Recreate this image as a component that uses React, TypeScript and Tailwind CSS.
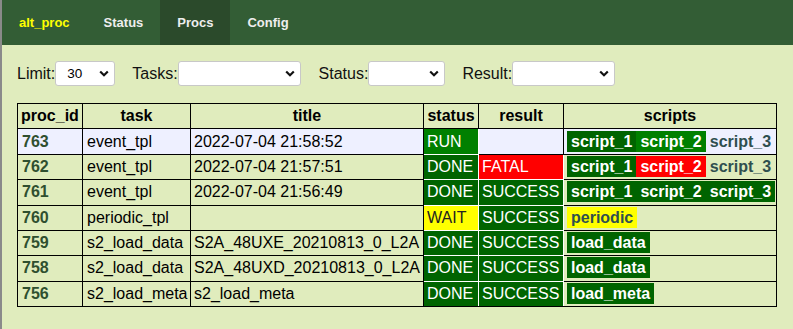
import React from 'react';

type Script = { name: string; state?: 'done' | 'run' | 'fail' | 'wait' };

interface Proc {
  id: number;
  task: string;
  title: string;
  status: 'RUN' | 'DONE' | 'WAIT';
  result: '' | 'FATAL' | 'SUCCESS';
  scripts: Script[];
  current?: boolean;
}

const procs: Proc[] = [
  {
    id: 763, task: 'event_tpl', title: '2022-07-04 21:58:52', status: 'RUN', result: '', current: true,
    scripts: [{ name: 'script_1', state: 'done' }, { name: 'script_2', state: 'run' }, { name: 'script_3' }],
  },
  {
    id: 762, task: 'event_tpl', title: '2022-07-04 21:57:51', status: 'DONE', result: 'FATAL',
    scripts: [{ name: 'script_1', state: 'done' }, { name: 'script_2', state: 'fail' }, { name: 'script_3' }],
  },
  {
    id: 761, task: 'event_tpl', title: '2022-07-04 21:56:49', status: 'DONE', result: 'SUCCESS',
    scripts: [{ name: 'script_1', state: 'done' }, { name: 'script_2', state: 'done' }, { name: 'script_3', state: 'done' }],
  },
  { id: 760, task: 'periodic_tpl', title: '', status: 'WAIT', result: 'SUCCESS', scripts: [{ name: 'periodic', state: 'wait' }] },
  { id: 759, task: 's2_load_data', title: 'S2A_48UXE_20210813_0_L2A', status: 'DONE', result: 'SUCCESS', scripts: [{ name: 'load_data', state: 'done' }] },
  { id: 758, task: 's2_load_data', title: 'S2A_48UXD_20210813_0_L2A', status: 'DONE', result: 'SUCCESS', scripts: [{ name: 'load_data', state: 'done' }] },
  { id: 756, task: 's2_load_meta', title: 's2_load_meta', status: 'DONE', result: 'SUCCESS', scripts: [{ name: 'load_meta', state: 'done' }] },
];

const statusCls: Record<string, string> = {
  RUN: 'bg-[#008000] text-white',
  DONE: 'bg-[#006400] text-white',
  WAIT: 'bg-[#ffff00] text-[#222]',
};

const resultCls: Record<string, string> = {
  FATAL: 'bg-[#ff0000] text-white',
  SUCCESS: 'bg-[#006400] text-white',
};

const scriptCls: Record<string, string> = {
  done: 'bg-[#006400] text-white',
  run: 'bg-[#008000] text-white',
  fail: 'bg-[#ff0000] text-white',
  wait: 'bg-[#ffff00] text-[#2f4f4f]',
};

const Chevron = () => (
  <svg width="10" height="7" viewBox="0 0 10 7" className="shrink-0">
    <path d="M1.2 1.5 L5 5.2 L8.8 1.5" fill="none" stroke="#111" strokeWidth="2.2" />
  </svg>
);

const FakeSelect = ({ width, value = '' }: { width: string; value?: string }) => (
  <div
    className={`${width} h-[25px] flex items-center justify-between bg-white border border-[#c8c8c8] rounded-[3px] pl-[11px] pr-[5px] text-[13.5px] text-black`}
  >
    <span>{value}</span>
    <Chevron />
  </div>
);

const App: React.FC = () => {
  const last = procs.length - 1;
  return (
    <div className="w-[793px] h-[329px] bg-[#e0ecbd] border-l-2 border-[#8a8a8a] overflow-hidden font-['Liberation_Sans',Arial,sans-serif] leading-[normal]">
      <nav className="h-[45px] bg-[#335d35] flex text-[13px] font-bold leading-[45px] text-[#eeeeee]">
        <span className="px-[17px] text-[#ffff00]">alt_proc</span>
        <span className="px-[17px]">Status</span>
        <span className="px-[17px] bg-[#2b4a2b]">Procs</span>
        <span className="px-[17px]">Config</span>
      </nav>

      <div className="flex items-center pl-[15px] mt-[16px] text-[16px] text-[#111]">
        <span>Limit:</span>
        <FakeSelect width="w-[60px]" value="30" />
        <span className="ml-[17px]">Tasks:</span>
        <FakeSelect width="w-[123px]" />
        <span className="ml-[18px]">Status:</span>
        <FakeSelect width="w-[77px]" />
        <span className="ml-[17px]">Result:</span>
        <FakeSelect width="w-[103px]" />
      </div>

      <table className="ml-[15px] mt-[17px] w-[759px] table-fixed border-collapse text-[16px] leading-[normal] text-black">
        <colgroup>
          <col className="w-[65px]" />
          <col className="w-[108px]" />
          <col className="w-[233px]" />
          <col className="w-[55px]" />
          <col className="w-[85px]" />
          <col className="w-[213px]" />
        </colgroup>
        <thead>
          <tr>
            {['proc_id', 'task', 'title', 'status', 'result', 'scripts'].map((h) => (
              <th key={h} className="border border-black px-[3px] py-[3.2px] font-bold text-center whitespace-nowrap">
                {h}
              </th>
            ))}
          </tr>
        </thead>
        <tbody>
          {procs.map((p, i) => {
            const edge = i === last ? 'border-r-white' : 'border-r-white border-b-white';
            return (
              <tr key={p.id} className={p.current ? 'bg-[#eef0ff]' : ''}>
                <td className="border border-black px-[4px] py-[3.2px] font-bold text-[#2f4f2f] whitespace-nowrap">{p.id}</td>
                <td className="border border-black px-[4px] py-[3.2px] whitespace-nowrap">{p.task}</td>
                <td className="border border-black px-[3px] py-[3.2px] whitespace-nowrap overflow-hidden">{p.title}</td>
                <td className={`border border-black ${edge} px-[3px] py-[3.2px] whitespace-nowrap ${statusCls[p.status]}`}>{p.status}</td>
                <td
                  className={`border border-black ${p.result ? edge : ''} px-[3px] py-[3.2px] whitespace-nowrap ${p.result ? resultCls[p.result] : ''}`}
                >
                  {p.result}
                </td>
                <td className="border border-black px-[3px] py-[3.2px] whitespace-nowrap">
                  {p.scripts.map((s) => (
                    <span
                      key={s.name}
                      className={`px-[4px] py-[2px] font-bold ${s.state ? scriptCls[s.state] : 'text-[#2f4f4f]'}`}
                    >
                      {s.name}
                    </span>
                  ))}
                </td>
              </tr>
            );
          })}
        </tbody>
      </table>
    </div>
  );
};

export default App;
